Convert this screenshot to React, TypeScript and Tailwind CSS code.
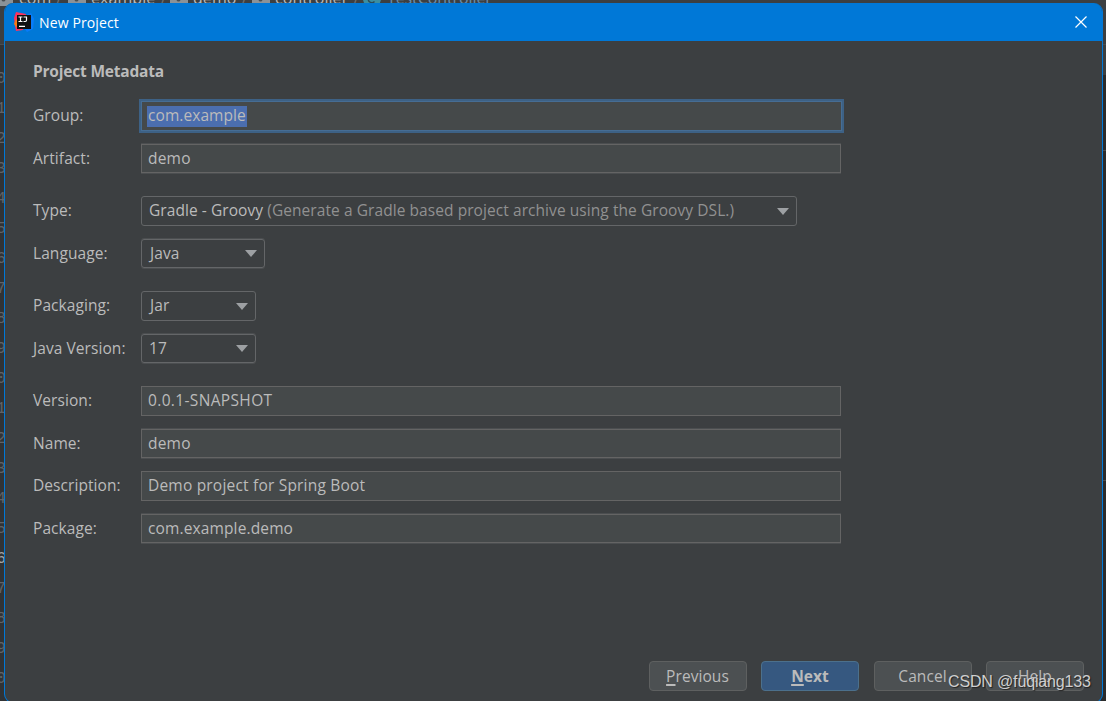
import { ReactNode } from "react";

const GUTTER = ["0", "1", "2", "3", "4", "5", "6", "7", "8", "9", "0", "1", "2", "3", "4", "5", "6", "7", "8", "9", "0"];
const CURRENT_LINE = 16;

const softEdge = "my-px h-[29px] shadow-[0_-1px_0_#4b4e50,0_1px_0_#4b4e50]";

function Folder() {
  return (
    <svg width="18" height="14" viewBox="0 0 18 14" className="shrink-0">
      <path d="M0 0H7L9 2H18V14H0Z" fill="#8b9297" />
      <circle cx="8.5" cy="7.5" r="2" fill="#4a4e51" />
    </svg>
  );
}

function Breadcrumbs() {
  return (
    <div className="flex h-[28px] w-full items-center text-[16px] whitespace-nowrap text-[#bbbbbb] -mt-[15px]">
      <div className="flex w-[68px] items-center">
        <span className="-ml-[5px]"><Folder /></span>
        <span className="ml-[6px] -mt-0.5">com</span>
        <span className="ml-auto mr-[6px] text-[#6e7173]">/</span>
      </div>
      <div className="flex w-[102px] items-center gap-[5px]"><Folder /><span className="-mt-0.5">example</span><span className="ml-auto mr-[6px] text-[#6e7173]">/</span></div>
      <div className="flex w-[82px] items-center gap-[5px]"><Folder /><span className="-mt-0.5">demo</span><span className="ml-auto mr-[6px] text-[#6e7173]">/</span></div>
      <div className="flex w-[111px] items-center gap-[5px]"><Folder /><span className="-mt-0.5">controller</span><span className="ml-auto mr-[9px] text-[#6e7173]">/</span></div>
      <div className="flex items-center gap-[6px]">
        <svg width="18" height="16" viewBox="0 0 18 16">
          <ellipse cx="9" cy="8" rx="9" ry="8" fill="#3b8ea0" />
          <path d="M11.5 10.5A3.5 3.5 0 1 1 11.5 6" stroke="#2b4a55" strokeWidth="1.5" fill="none" />
        </svg>
        <span className="-mt-0.5 tracking-[-0.1px] text-[#6a8fae]">TestController</span>
      </div>
    </div>
  );
}

function Logo() {
  return (
    <svg width="20" height="20" viewBox="0 0 20 20">
      <path d="M2 0L12 2L9 18L2 19L1 14L0 6Z" fill="#fe315d" />
      <path d="M0 12L2 7L5 10V13L2 15Z" fill="#f97a12" />
      <path d="M12 3L17 1L20 7L19 17L13 20L10 16Z" fill="#087cfa" />
      <rect x="3" y="3" width="14" height="14" fill="#111" />
      <path d="M4.5 5H8.5M6.5 5V9.5M4.5 9.5H8.5M9.5 5H13M12.5 5V8.3Q12.5 9.5 11.3 9.5H9.5" stroke="#fff" strokeWidth="1.2" fill="none" />
      <path d="M5 14.3H11" stroke="#fff" strokeWidth="1.2" />
    </svg>
  );
}

function Row({ label, className = "", children }: { label: string; className?: string; children: ReactNode }) {
  return (
    <div className={`flex items-center ${className}`}>
      <div className="w-[108px] whitespace-nowrap pb-0.5">{label}</div>
      {children}
    </div>
  );
}

function Field({ value, soft, tracking = "" }: { value: string; soft?: boolean; tracking?: string }) {
  return (
    <div className={`flex w-[700px] items-center border border-[#646464] bg-[#45494a] pb-0.5 pl-[6px] ${tracking} ${soft ? softEdge : "h-[30px]"}`}>
      {value}
    </div>
  );
}

function Select({ width, soft, children }: { width: string; soft?: boolean; children: ReactNode }) {
  return (
    <div className={`flex items-center justify-between rounded-[3px] border border-[#646668] pl-[7px] pr-[7px] ${width} ${soft ? softEdge : "h-[30px]"}`}>
      <span className="whitespace-nowrap pb-0.5">{children}</span>
      <svg width="12" height="7" viewBox="0 0 12 7"><path d="M0 0H12L6 7Z" fill="#9da0a3" /></svg>
    </div>
  );
}

function Button({ children, primary }: { children: ReactNode; primary?: boolean }) {
  return (
    <button
      type="button"
      className={
        primary
          ? "h-[30px] w-[98px] rounded-[4px] border border-[#4c708c] bg-[#365880] font-bold"
          : "h-[30px] w-[98px] rounded-[4px] border border-[#5e6060] bg-[#4c5052]"
      }
    >
      {children}
    </button>
  );
}

function Mnemonic({ children }: { children: string }) {
  return <span className="underline decoration-2 underline-offset-2">{children}</span>;
}

export default function App() {
  return (
    <div className="relative h-[701px] w-[1106px] overflow-hidden bg-[#313335] font-['Open_Sans',sans-serif] text-[15.5px] leading-5 tracking-[0.07px] text-[#bbbbbb]">
      {/* editor behind the dialog */}
      <div className="flex h-[45px] flex-col justify-between border-b border-[#4b4e50] bg-[#3c3f41]">
        <Breadcrumbs />
      </div>
      <div className="flex h-[656px] justify-between">
        <div className="flex w-[6px] flex-col items-end pt-[19px] font-['Liberation_Mono',monospace] text-[16px] text-[#606366]">
          {GUTTER.map((n, i) => (
            <div key={i} className={`h-[30px] leading-[30px] ${i === CURRENT_LINE ? "text-[#a4a3a3]" : ""}`}>{n}</div>
          ))}
        </div>
        <div className="flex w-[6px] flex-col">
          <div className="h-[30px] bg-[#3c3f41]" />
          <div className="h-[75px] bg-[#2b2b2b]" />
          <div className="h-px bg-[#4d4d4d]" />
          <div className="h-[329px] bg-[#2b2b2b]" />
          <div className="h-px bg-[#4d4d4d]" />
          <div className="flex-1 bg-[#2b2b2b]" />
        </div>
      </div>

      <div className="absolute left-[4px] top-[3px] flex h-[700px] w-[1099px] flex-col overflow-hidden rounded-[9px] border border-t-0 border-[#0078d7] bg-[#3c3f41]">
        <div className="flex h-[38px] shrink-0 items-center bg-[#0078d7] pl-[9px] pr-[15px] text-white">
          <Logo />
          <span className="ml-[5px] pt-px text-[14px] tracking-[0.13px]">New Project</span>
          <svg width="12" height="12" viewBox="0 0 12 12" className="ml-auto">
            <path d="M0.5 0.5L11.5 11.5M11.5 0.5L0.5 11.5" stroke="#fff" strokeWidth="1.2" />
          </svg>
        </div>

        <div className="flex flex-col pl-[28px] pt-[20px]">
          <div className="mb-[20px] font-bold tracking-[-0.2px]">Project Metadata</div>
          <Row label="Group:">
            <div className="flex h-[30px] w-[701px] items-center border border-[#466d94] bg-[#45494a] pl-[5px] shadow-[0_0_0_2px_#3d6185]">
              <span className="h-[21px] bg-[#4b6eaf] px-px leading-[18px]">com.example</span>
            </div>
          </Row>
          <Row label="Artifact:" className="mt-[12px]"><Field value="demo" soft tracking="tracking-[0.2px]" /></Row>
          <Row label="Type:" className="mt-[22px]">
            <Select width="w-[656px]">
              Gradle - Groovy <span className="text-[#919191]">(Generate a Gradle based project archive using the Groovy DSL.)</span>
            </Select>
          </Row>
          <Row label="Language:" className="mt-[12px]"><Select width="w-[124px]" soft><span className="ml-px">Java</span></Select></Row>
          <Row label="Packaging:" className="mt-[22px]"><Select width="w-[115px]"><span className="ml-px">Jar</span></Select></Row>
          <Row label="Java Version:" className="mt-[12px]"><Select width="w-[115px]" soft>17</Select></Row>
          <Row label="Version:" className="mt-[22px]"><Field value="0.0.1-SNAPSHOT" tracking="tracking-[0.35px]" /></Row>
          <Row label="Name:" className="mt-[12px]"><Field value="demo" soft tracking="tracking-[0.2px]" /></Row>
          <Row label="Description:" className="mt-[12px]"><Field value="Demo project for Spring Boot" tracking="tracking-[0.2px]" /></Row>
          <Row label="Package:" className="mt-[12px]"><Field value="com.example.demo" soft tracking="tracking-[0.13px]" /></Row>
        </div>

        <div className="mb-[11px] mt-auto flex justify-end gap-[14.5px] pr-[18px]">
          <Button><Mnemonic>P</Mnemonic>revious</Button>
          <Button primary><Mnemonic>N</Mnemonic>ext</Button>
          <Button>Cancel</Button>
          <Button>Help</Button>
        </div>
      </div>

      <div className="absolute left-[948px] top-[672px] whitespace-nowrap font-['Liberation_Sans',sans-serif] text-[16px] tracking-[-0.15px] text-[#cfcfcf] [text-shadow:1px_1px_1px_#222]">
        CSDN @fuqiang133
      </div>
    </div>
  );
}
